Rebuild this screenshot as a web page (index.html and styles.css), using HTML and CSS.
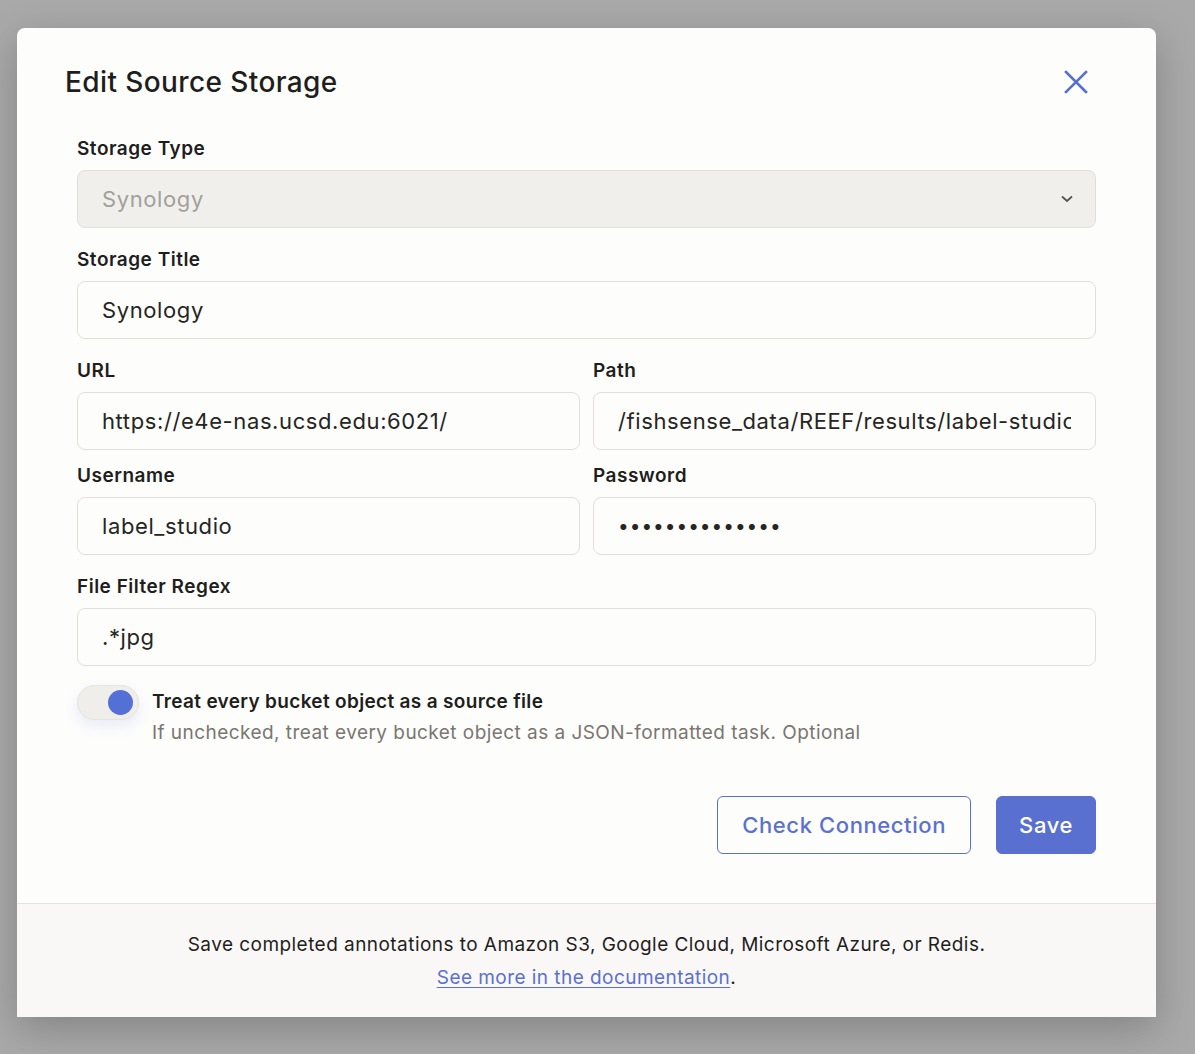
FILE: index.html
```html
<!DOCTYPE html>
<html lang="en">
<head>
<meta charset="utf-8">
<title>Edit Source Storage</title>
<link rel="stylesheet" href="styles.css">
</head>
<body>
<div class="overlay">
  <div class="modal">
    <div class="modal-header">
      <h1 class="title">Edit Source Storage</h1>
      <button class="close" aria-label="Close">
        <svg width="24" height="24" viewBox="0 0 24 24"><path d="M2 2 L22 22 M22 2 L2 22" stroke="#5670d2" stroke-width="2.6" stroke-linecap="square" fill="none"/></svg>
      </button>
    </div>
    <form class="form">
      <div class="field">
        <label class="label">Storage Type</label>
        <div class="select">
          <span>Synology</span>
          <svg class="chevron" width="12" height="8" viewBox="0 0 12 8"><path d="M1 1.5 L6 6 L11 1.5" stroke="#555" stroke-width="1.8" fill="none"/></svg>
        </div>
      </div>
      <div class="field">
        <label class="label">Storage Title</label>
        <input class="input" type="text" value="Synology">
      </div>
      <div class="row">
        <div class="field field-tight">
          <label class="label">URL</label>
          <input class="input" type="text" value="https://e4e-nas.ucsd.edu:6021/">
        </div>
        <div class="field field-tight">
          <label class="label">Path</label>
          <input class="input" type="text" value="/fishsense_data/REEF/results/label-studio/">
        </div>
      </div>
      <div class="row">
        <div class="field">
          <label class="label">Username</label>
          <input class="input" type="text" value="label_studio">
        </div>
        <div class="field">
          <label class="label">Password</label>
          <input class="input password" type="password" value="labelstudio123">
        </div>
      </div>
      <div class="field field-last">
        <label class="label">File Filter Regex</label>
        <input class="input" type="text" value=".*jpg">
      </div>
      <div class="toggle-row">
        <span class="toggle"><span class="knob"></span></span>
        <div class="toggle-text">
          <div class="toggle-title">Treat every bucket object as a source file</div>
          <div class="toggle-desc">If unchecked, treat every bucket object as a JSON-formatted task. Optional</div>
        </div>
      </div>
      <div class="actions">
        <button type="button" class="btn btn-outline">Check Connection</button>
        <button type="button" class="btn btn-primary">Save</button>
      </div>
    </form>
    <div class="footer">
      <div>Save completed annotations to Amazon S3, Google Cloud, Microsoft Azure, or Redis.</div>
      <div><a href="#" class="link">See more in the documentation</a>.</div>
    </div>
  </div>
</div>
</body>
</html>
```
FILE: styles.css
```css
html, body {
  margin: 0;
  padding: 0;
}
body {
  background: #a9a9a9;
  height: 1054px;
  overflow: hidden;
  font-family: "Inter", "Noto Sans", sans-serif;
  color: #1f1e1c;
}
.overlay {
  padding: 28px 39px 0 17px;
}
.modal {
  background: #fdfdfc;
  border-radius: 8px 8px 0 0;
  box-shadow: 0 12px 40px rgba(0, 0, 0, 0.22);
  width: 1139px;
}
.modal-header {
  display: flex;
  justify-content: space-between;
  align-items: center;
  padding: 36px 68px 0 48px;
  height: 36px;
}
.title {
  margin: 0;
  font-size: 28px;
  line-height: 36px;
  font-weight: 500;
  color: #1f1e1c;
  letter-spacing: 0.4px;
}
.close {
  border: 0;
  background: none;
  padding: 0;
  width: 24px;
  height: 24px;
  display: flex;
  cursor: pointer;
}
.form {
  padding: 38px 60px 49px 60px;
}
.field {
  display: flex;
  flex-direction: column;
  margin-bottom: 21px;
  flex: 1;
  min-width: 0;
}
.field-tight {
  margin-bottom: 15px;
}
.field-last {
  margin-bottom: 19px;
}
.row {
  display: flex;
  gap: 13px;
}
.label {
  font-size: 19px;
  line-height: 22px;
  font-weight: 600;
  letter-spacing: 0.5px;
  margin-bottom: 10px;
  color: #1f1e1c;
}
.input, .select {
  box-sizing: border-box;
  height: 58px;
  border: 1px solid #e2dfd9;
  border-radius: 8px;
  padding: 0 24px;
  font-family: inherit;
  font-size: 22px;
  letter-spacing: 0.6px;
  color: #262522;
  background: #fdfdfc;
  outline: none;
  width: 100%;
}
.password {
  font-size: 19px;
  letter-spacing: 1px;
}
.select {
  display: flex;
  align-items: center;
  justify-content: space-between;
  background: #f0efec;
  color: #a29f9a;
  padding-right: 22px;
}
.toggle-row {
  display: flex;
  gap: 13px;
  align-items: flex-start;
}
.toggle {
  box-sizing: border-box;
  width: 62px;
  height: 35px;
  border-radius: 18px;
  background: #efeeeb;
  border: 1px solid #e6e4e0;
  display: flex;
  align-items: center;
  justify-content: flex-end;
  padding-right: 5px;
  flex: none;
  box-shadow: 0 6px 14px rgba(90, 110, 210, 0.12);
}
.knob {
  width: 25px;
  height: 25px;
  border-radius: 50%;
  background: #5470d6;
}
.toggle-text {
  padding-top: 5px;
}
.toggle-title {
  font-size: 19px;
  line-height: 24px;
  font-weight: 600;
  letter-spacing: 0.33px;
  color: #1f1e1c;
}
.toggle-desc {
  margin-top: 7px;
  font-size: 19px;
  line-height: 24px;
  letter-spacing: 0.45px;
  color: #7a7670;
}
.actions {
  display: flex;
  justify-content: flex-end;
  gap: 25px;
  margin-top: 51px;
}
.btn {
  height: 58px;
  border-radius: 6px;
  padding: 0 24px;
  font-family: inherit;
  font-size: 22px;
  font-weight: 500;
  letter-spacing: 0.6px;
  cursor: pointer;
}
.btn-outline {
  background: #fdfdfc;
  border: 1px solid #5a70d2;
  color: #5a70d2;
}
.btn-primary {
  background: #5a70d0;
  border: 1px solid #5a70d0;
  color: #ffffff;
  padding: 0 22px;
}
.footer {
  border-top: 1px solid #e6e3de;
  background: #f9f8f7;
  text-align: center;
  padding: 24px 0 23px;
  font-size: 19px;
  line-height: 33px;
  letter-spacing: 0.45px;
  color: #1f1e1c;
}
.link {
  color: #5a70d2;
  text-decoration: underline;
  text-underline-offset: 3px;
}
```
